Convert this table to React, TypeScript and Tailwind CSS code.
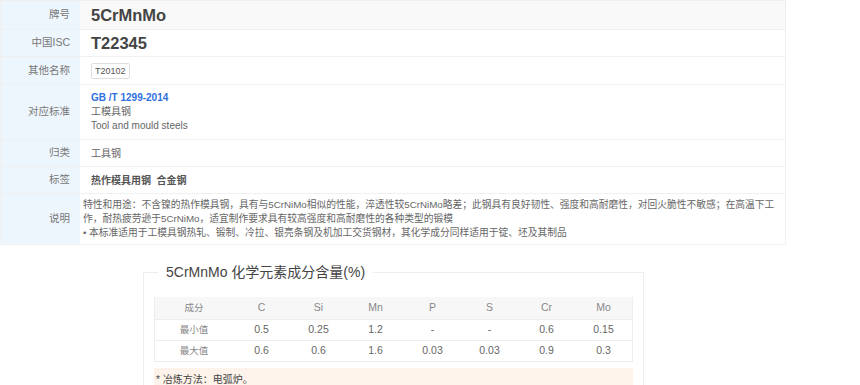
import React from "react";

const font = { fontFamily: '"Liberation Sans", "Noto Sans CJK SC", sans-serif' };

const rows: { label: string; h: string; stripe?: boolean; pad?: string; content: React.ReactNode }[] = [
  {
    label: "牌号",
    h: "h-[28px]",
    stripe: true,
    content: <span className="text-[16.5px] font-bold text-[#444]">5CrMnMo</span>,
  },
  {
    label: "中国ISC",
    h: "h-[27px]",
    content: <span className="text-[16.5px] font-bold text-[#444]">T22345</span>,
  },
  {
    label: "其他名称",
    h: "h-[28px]",
    content: (
      <span className="inline-block border border-[#ddd] rounded-[2px] px-[3px] leading-[14px] text-[9px] text-[#555] bg-white">
        T20102
      </span>
    ),
  },
  {
    label: "对应标准",
    h: "h-[55px]",
    content: (
      <div className="flex flex-col leading-[14px]">
        <span className="text-[10px] font-bold text-[#2f6fe0]">GB /T 1299-2014</span>
        <span className="text-[10px] text-[#666]">工模具钢</span>
        <span className="text-[10px] text-[#666]">Tool and mould steels</span>
      </div>
    ),
  },
  {
    label: "归类",
    h: "h-[27px]",
    content: <span className="text-[10px] text-[#666]">工具钢</span>,
  },
  {
    label: "标签",
    h: "h-[27px]",
    content: (
      <span className="text-[10px] font-bold text-[#555]">
        热作模具用钢&nbsp;&nbsp;合金钢
      </span>
    ),
  },
  {
    label: "说明",
    h: "h-[51px]",
    pad: "pl-[3px]",
    content: (
      <div className="text-[9.75px] leading-[14px] text-[#666] whitespace-nowrap">
        特性和用途：不含镍的热作模具钢，具有与5CrNiMo相似的性能，淬透性较5CrNiMo略差；此钢具有良好韧性、强度和高耐磨性，对回火脆性不敏感；在高温下工
        <br />
        作，耐热疲劳逊于5CrNiMo，适宜制作要求具有较高强度和高耐磨性的各种类型的锻模
        <br />• 本标准适用于工模具钢热轧、锻制、冷拉、银亮条钢及机加工交货钢材，其化学成分同样适用于锭、坯及其制品
      </div>
    ),
  },
];

const cols = ["C", "Si", "Mn", "P", "S", "Cr", "Mo"];
const minV = ["0.5", "0.25", "1.2", "-", "-", "0.6", "0.15"];
const maxV = ["0.6", "0.6", "1.6", "0.03", "0.03", "0.9", "0.3"];

function ChemRow({ name, vals, head }: { name: string; vals: string[]; head?: boolean }) {
  return (
    <div
      className={`flex items-center text-[10.5px] ${
        head ? "h-[22px] bg-[#f7f7f7] text-[#888]" : "h-[21px] border-t border-[#eee] text-[#666]"
      }`}
    >
      <div className="w-[78px] text-center text-[9.5px] text-[#888]">{name}</div>
      {vals.map((v, i) => (
        <div key={i} className="w-[57px] text-center">
          {v}
        </div>
      ))}
    </div>
  );
}

export default function App() {
  return (
    <div className="w-[860px] h-[385px] overflow-hidden bg-white" style={font}>
      <div className="w-[786px] border border-[#f0f0f0]">
        {rows.map((r, i) => (
          <div key={i} className={`flex ${r.h} ${i > 0 ? "border-t border-[#f0f0f0]" : ""}`}>
            <div className="w-[79px] shrink-0 bg-[#eef6fd] flex items-center justify-end pr-[10px] text-[10.5px] text-[#777]">
              {r.label}
            </div>
            <div
              className={`flex-1 flex items-center ${r.pad ?? "pl-[11px]"} ${
                r.stripe ? "bg-[#f9f9f9]" : "bg-white"
              }`}
            >
              {r.content}
            </div>
          </div>
        ))}
      </div>

      <div className="ml-[143px] mt-[27px] w-[501px] border border-[#eee] border-b-0 relative pt-[24px] px-[10px] h-[200px]">
        <div className="absolute left-[14px] -top-[10px] bg-white px-[8px] text-[14px] leading-[18px] text-[#444]">
          5CrMnMo 化学元素成分含量(%)
        </div>
        <div className="border border-[#eee] border-t-0">
          <ChemRow name="成分" vals={cols} head />
          <ChemRow name="最小值" vals={minV} />
          <ChemRow name="最大值" vals={maxV} />
        </div>
        <div className="mt-[6px] bg-[#fdf3ea] h-[30px] pl-[2px] pt-[4px] text-[10px] text-[#444]">
          * 冶炼方法：电弧炉。
        </div>
      </div>
    </div>
  );
}
